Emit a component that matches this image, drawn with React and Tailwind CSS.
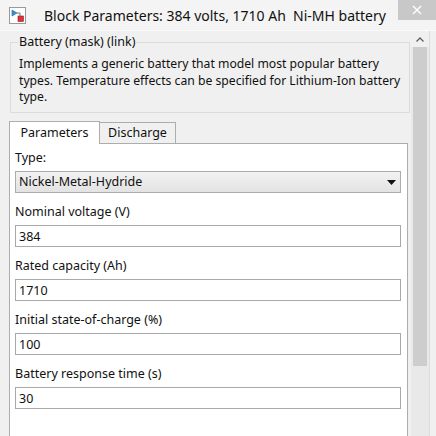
import { useState } from 'react';

const font = { fontFamily: '"Segoe UI", "Noto Sans", "Open Sans", sans-serif' };

function BlockIcon() {
  return (
    <svg width="17" height="17" viewBox="0 0 17 17">
      <rect x="0.5" y="0.5" width="16" height="16" fill="#fdfdfd" stroke="#9a9a9a" />
      <path d="M3 3 L3 9 L8 6 Z" fill="#3a8fd0" stroke="#1f6aa8" strokeWidth="0.6" />
      <path d="M8 6 L11 6 L11 9" fill="none" stroke="#555" strokeWidth="0.8" />
      <rect x="9" y="9" width="5.5" height="5.5" fill="#d9343a" stroke="#9e1d22" strokeWidth="0.6" />
    </svg>
  );
}

function Field({ label, value }) {
  return (
    <div className="flex flex-col">
      <div className="h-4 leading-4 mb-[5px] text-[12.5px] text-[#111]">{label}</div>
      <input
        defaultValue={value}
        className="h-[22px] w-[386px] border border-[#a9a9a9] bg-white pl-[3px] text-[12.5px] text-[#111] outline-none"
        style={font}
      />
    </div>
  );
}

export default function App() {
  const [tab, setTab] = useState('params');

  return (
    <div className="w-[436px] h-[436px] overflow-hidden bg-[#f0f0f0] flex flex-col" style={font}>
      {/* title bar */}
      <div className="h-[30px] flex items-start bg-[#f4f4f4] relative shrink-0">
        <div className="pl-[9px] pt-[7px]">
          <BlockIcon />
        </div>
        <div className="pl-[18px] pt-[5px] text-[14px] text-[#111] whitespace-nowrap">
          Block Parameters: 384 volts, 1710 Ah&nbsp; Ni-MH battery
        </div>
        <div className="absolute right-0 top-0 w-[38px] h-[20px] bg-[#c8c8c8] flex items-center justify-center">
          <svg width="10" height="10" viewBox="0 0 10 10">
            <path d="M1 1 L9 9 M9 1 L1 9" stroke="#fff" strokeWidth="1.4" />
          </svg>
        </div>
      </div>

      <div className="flex flex-1 border-t border-[#fafafa] min-h-0">
        {/* main content */}
        <div className="w-[411px] shrink-0 flex flex-col">
          <fieldset className="ml-[10px] mr-[1px] mt-[3px] h-[79px] border border-[#dcdcdc] pl-[8px] pr-0 min-w-0">
            <legend className="px-[1px] -ml-[1px] text-[12.5px] leading-4 text-[#111]">Battery (mask) (link)</legend>
            <p className="mt-[6px] text-[12.2px] leading-[16.5px] text-[#111] whitespace-nowrap">
              Implements a generic battery that model most popular battery
              <br />
              types. Temperature effects can be specified for Lithium-Ion battery
              <br />
              type.
            </p>
          </fieldset>

          <div className="mt-[7px] ml-[9px] flex items-end h-[23px]">
            <button
              onClick={() => setTab('params')}
              className="h-[23px] w-[91px] bg-white border border-b-0 border-[#adadad] text-[12.5px] text-[#111] relative top-[1px] z-10"
              style={font}
            >
              Parameters
            </button>
            <button
              onClick={() => setTab('discharge')}
              className="h-[21px] w-[76px] bg-[#f0f0f0] border border-l-0 border-b-0 border-[#adadad] text-[12.5px] text-[#111]"
              style={font}
            >
              Discharge
            </button>
          </div>

          <div className="ml-[9px] mr-[3px] flex-1 bg-white border border-b-0 border-[#adadad] pt-[6px] pl-[5px] flex flex-col gap-[11px]">
            <div className="flex flex-col">
              <div className="h-4 leading-4 mb-[5px] text-[12.5px] text-[#111]">Type:</div>
              <div className="h-[22px] w-[386px] border border-[#acacac] bg-gradient-to-b from-[#f2f2f2] to-[#e3e3e3] flex items-center justify-between pl-[3px] pr-[4px]">
                <span className="text-[12.5px] text-[#111]">Nickel-Metal-Hydride</span>
                <svg width="9" height="5" viewBox="0 0 9 5">
                  <path d="M0 0 L9 0 L4.5 5 Z" fill="#111" />
                </svg>
              </div>
            </div>
            {tab === 'params' && (
              <>
                <Field label="Nominal voltage (V)" value="384" />
                <Field label="Rated capacity (Ah)" value="1710" />
                <Field label="Initial state-of-charge (%)" value="100" />
                <Field label="Battery response time (s)" value="30" />
              </>
            )}
          </div>
        </div>

        {/* scrollbar */}
        <div className="w-[19px] shrink-0 flex flex-col bg-[#e9e9e9] border-r border-[#dcdcdc]">
          <div className="h-[16px] flex items-center justify-center bg-[#f0f0f0]">
            <svg width="8" height="5" viewBox="0 0 8 5">
              <path d="M0.5 4.5 L4 1 L7.5 4.5" fill="none" stroke="#606060" strokeWidth="1.3" />
            </svg>
          </div>
          <div className="mx-[2px] h-[319px] bg-[#cdcdcd]" />
        </div>
        <div className="flex-1 bg-[#f0f0f0]" />
      </div>
    </div>
  );
}
